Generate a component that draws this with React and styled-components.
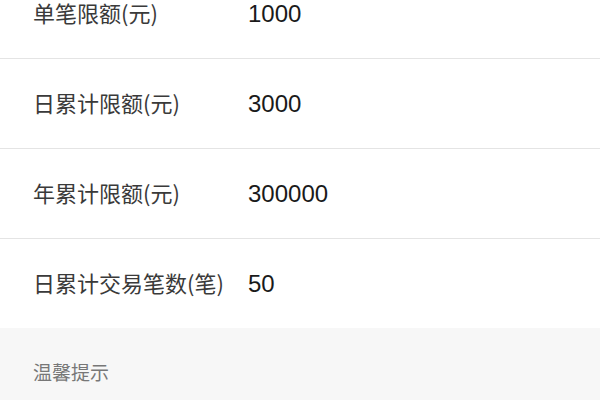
import React from 'react'
import styled, {createGlobalStyle} from 'styled-components'

const GlobalStyle = createGlobalStyle`
	html, body {
		margin: 0;
		padding: 0;
		background: #ffffff;
	}
	body {
		font-family: "Liberation Sans", "Noto Sans CJK SC", sans-serif;
		overflow: hidden;
	}
`

const Page = styled.div`
	width: 600px;
	height: 400px;
	overflow: hidden;
	background: #f7f7f7;
`

const LimitList = styled.div`
	margin-top: -31px;
	background: #ffffff;
`

const Row = styled.div`
	display: flex;
	align-items: center;
	height: 89px;
	padding-left: 33px;
	border-bottom: ${props => props.last ? 'none' : '1px solid #e4e4e4'};
`

const RowText = styled.div`
	display: flex;
	align-items: baseline;
	line-height: 1;
`

const Label = styled.span`
	width: 215px;
	flex-shrink: 0;
	font-family: "Noto Sans CJK SC", sans-serif;
	font-size: 22px;
	color: #3a3a3a;
	white-space: nowrap;
`

const Value = styled.span`
	font-family: "Liberation Sans", sans-serif;
	font-size: 24px;
	color: #1a1a1a;
`

const TipSection = styled.div`
	padding: 30px 33px 0;
`

const TipTitle = styled.div`
	font-family: "Noto Sans CJK SC", sans-serif;
	font-size: 19px;
	color: #777777;
`

const limits = [
	{label: '单笔限额(元)', value: '1000'},
	{label: '日累计限额(元)', value: '3000'},
	{label: '年累计限额(元)', value: '300000'},
	{label: '日累计交易笔数(笔)', value: '50'}
]

const App = () => (
	<Page>
		<GlobalStyle />
		<LimitList>
			{limits.map((item, i) => (
				<Row key={`limit-${i}`} last={i === limits.length - 1}>
					<RowText>
						<Label>{item.label}</Label>
						<Value>{item.value}</Value>
					</RowText>
				</Row>
			))}
		</LimitList>
		<TipSection>
			<TipTitle>温馨提示</TipTitle>
		</TipSection>
	</Page>
)

export default App
